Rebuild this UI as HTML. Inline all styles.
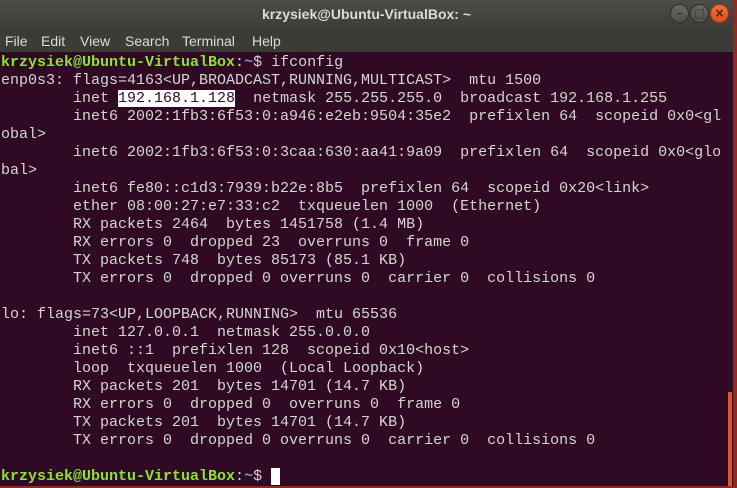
<!DOCTYPE html>
<html><head><meta charset="utf-8"><style>
html,body{margin:0;padding:0;width:737px;height:488px;overflow:hidden;background:#8f2a20;}
#win{position:absolute;left:0;top:0;width:733px;height:486px;background:#300a24;overflow:hidden}
#title{position:absolute;left:0;top:0;width:733px;height:30px;background:linear-gradient(#4d4c48,#3d3c38);color:#dfdbd2;font:bold 14px "Liberation Sans",sans-serif;text-align:center;line-height:28px}
#menu{position:absolute;left:0;top:30px;width:733px;height:22px;background:#3c3b37;color:#dfdbd2;font:14px "Liberation Sans",sans-serif;line-height:22px}
#menu span{position:absolute;top:0}
.btn{position:absolute;top:4px;width:19px;height:19px;border-radius:50%;background:linear-gradient(#6a6965,#504f4b);border:1px solid #2e2d2a;box-sizing:border-box;color:#3a3935;font:bold 12px "DejaVu Sans",sans-serif;text-align:center;line-height:17px}
#term{position:absolute;left:1px;top:54px;font:15px/18px "Liberation Mono",monospace;color:#d3d7cf;white-space:pre;margin:0}
.g{color:#8ae234;font-weight:bold}.b{color:#729fcf;font-weight:bold}
.sel{background:#fff;color:#300a24}
.cur{background:#fff;color:#fff}
#sb{position:absolute;left:728px;top:392px;width:4px;height:94px;background:#d65a2e}
</style></head><body>
<div id="win">
<div id="title">krzysiek@Ubuntu-VirtualBox: ~</div>
<div class="btn" style="left:670px">–</div>
<div class="btn" style="left:690px">□</div>
<div class="btn" style="left:710px;background:linear-gradient(#f2703d,#df4e1c);border-color:#9c3a14;color:#4a1a08">×</div>
<div id="menu"><span style="left:5px">File</span><span style="left:41px">Edit</span><span style="left:80px">View</span><span style="left:125px">Search</span><span style="left:182px">Terminal</span><span style="left:252px">Help</span></div>
<pre id="term"><span class="g">krzysiek@Ubuntu-VirtualBox</span>:<span class="b">~</span>$ ifconfig
enp0s3: flags=4163&lt;UP,BROADCAST,RUNNING,MULTICAST&gt;  mtu 1500
        inet <span class="sel">192.168.1.128</span>  netmask 255.255.255.0  broadcast 192.168.1.255
        inet6 2002:1fb3:6f53:0:a946:e2eb:9504:35e2  prefixlen 64  scopeid 0x0&lt;gl
obal&gt;
        inet6 2002:1fb3:6f53:0:3caa:630:aa41:9a09  prefixlen 64  scopeid 0x0&lt;glo
bal&gt;
        inet6 fe80::c1d3:7939:b22e:8b5  prefixlen 64  scopeid 0x20&lt;link&gt;
        ether 08:00:27:e7:33:c2  txqueuelen 1000  (Ethernet)
        RX packets 2464  bytes 1451758 (1.4 MB)
        RX errors 0  dropped 23  overruns 0  frame 0
        TX packets 748  bytes 85173 (85.1 KB)
        TX errors 0  dropped 0 overruns 0  carrier 0  collisions 0

lo: flags=73&lt;UP,LOOPBACK,RUNNING&gt;  mtu 65536
        inet 127.0.0.1  netmask 255.0.0.0
        inet6 ::1  prefixlen 128  scopeid 0x10&lt;host&gt;
        loop  txqueuelen 1000  (Local Loopback)
        RX packets 201  bytes 14701 (14.7 KB)
        RX errors 0  dropped 0  overruns 0  frame 0
        TX packets 201  bytes 14701 (14.7 KB)
        TX errors 0  dropped 0 overruns 0  carrier 0  collisions 0

<span class="g">krzysiek@Ubuntu-VirtualBox</span>:<span class="b">~</span>$ <span class="cur">_</span></pre>
<div id="sb"></div>
</div>
</body></html>
